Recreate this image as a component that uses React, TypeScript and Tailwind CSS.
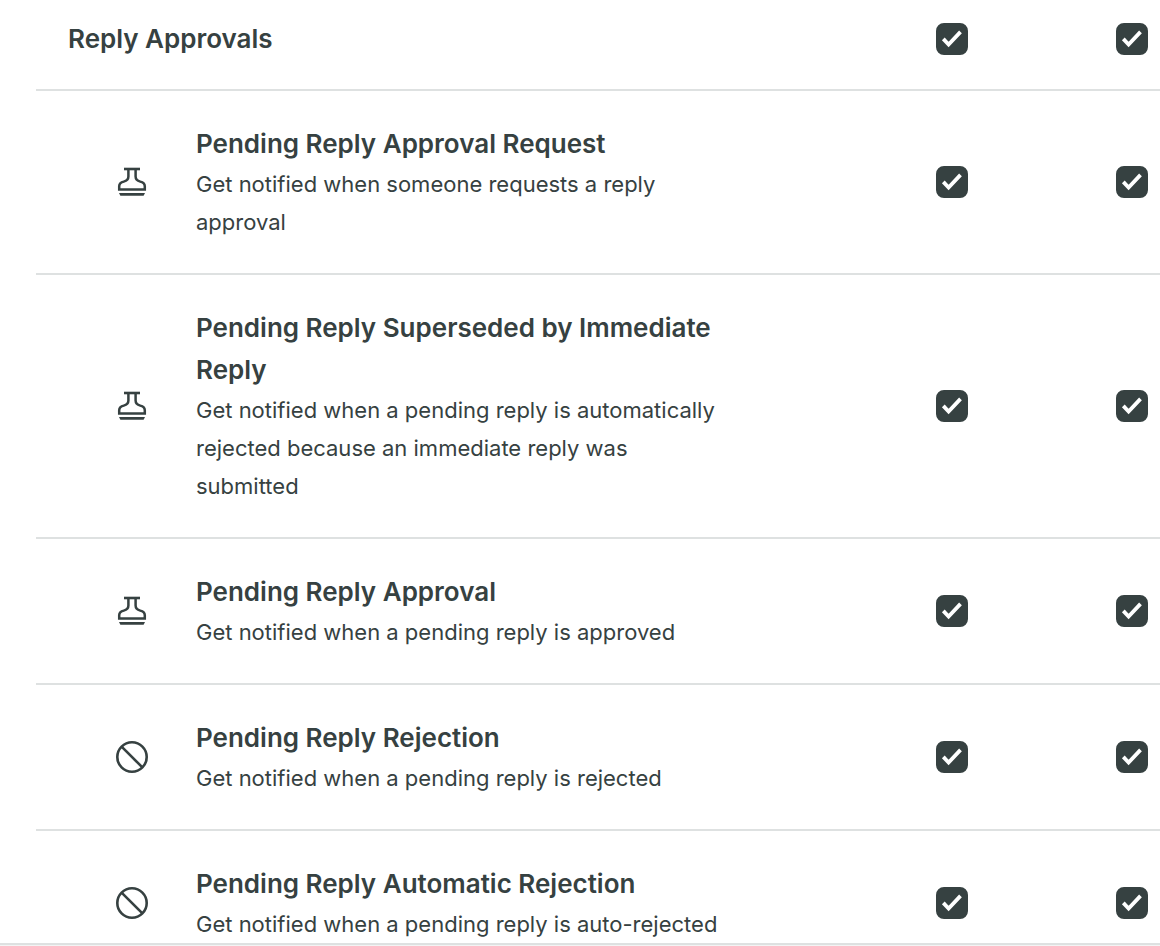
import { useState } from "react";

type IconName = "stamp" | "ban";

type Setting = {
  id: string;
  icon: IconName;
  title: string;
  description: string;
};

const settings: Setting[] = [
  {
    id: "approval-request",
    icon: "stamp",
    title: "Pending Reply Approval Request",
    description: "Get notified when someone requests a reply approval",
  },
  {
    id: "superseded",
    icon: "stamp",
    title: "Pending Reply Superseded by Immediate Reply",
    description:
      "Get notified when a pending reply is automatically rejected because an immediate reply was submitted",
  },
  {
    id: "approval",
    icon: "stamp",
    title: "Pending Reply Approval",
    description: "Get notified when a pending reply is approved",
  },
  {
    id: "rejection",
    icon: "ban",
    title: "Pending Reply Rejection",
    description: "Get notified when a pending reply is rejected",
  },
  {
    id: "auto-rejection",
    icon: "ban",
    title: "Pending Reply Automatic Rejection",
    description: "Get notified when a pending reply is auto-rejected",
  },
];

const channels = ["email", "push"];

const StampIcon = () => (
  <svg viewBox="0 0 32 32" className="w-8 h-8" fill="none" aria-hidden="true">
    <path d="M8 3h16" stroke="currentColor" strokeWidth="2.6" />
    <path
      d="M12.4 3v7.6c0 3-1.6 4.3-4.6 5C4.800 16.300 3.200 17.500 3.200 20.200v3.400h25.600v-3.400c0-2.700-1.600-3.900-4.600-4.600-3-.7-4.600-2-4.600-5V3"
      stroke="currentColor"
      strokeWidth="2.5"
    />
    <path d="M3 27h26l-1.400 2.800H4.400z" fill="currentColor" />
  </svg>
);

const BanIcon = () => (
  <svg viewBox="0 0 32 32" className="w-8 h-8" fill="none" aria-hidden="true">
    <circle cx="16" cy="16" r="14.7" stroke="currentColor" strokeWidth="2.6" />
    <path d="M5.600 5.600l20.800 20.800" stroke="currentColor" strokeWidth="2.6" />
  </svg>
);

const CheckBox = ({ label }: { label: string }) => {
  const [checked, setChecked] = useState(true);

  return (
    <label className="relative inline-block w-8 h-8 align-middle cursor-pointer">
      <input
        type="checkbox"
        aria-label={label}
        checked={checked}
        onChange={(e) => setChecked(e.target.checked)}
        className="peer block appearance-none w-8 h-8 rounded-lg border-2 border-[#364141] checked:bg-[#364141]"
      />
      <svg
        viewBox="0 0 32 32"
        className="absolute inset-0 w-8 h-8 pointer-events-none text-white opacity-0 peer-checked:opacity-100"
        fill="none"
        aria-hidden="true"
      >
        <path
          d="M7.300 15.900l5.300 5.600L24.500 8.900"
          stroke="currentColor"
          strokeWidth="3.8"
        />
      </svg>
    </label>
  );
};

const SettingRow = ({ setting }: { setting: Setting }) => (
  <tr className="group border-b-2 border-[#dee1e1] last:border-b-0">
    <td className="w-40 pt-8 pb-8 pl-20 group-last:pb-0">
      {setting.icon === "stamp" ? <StampIcon /> : <BanIcon />}
    </td>
    <th
      scope="row"
      className="pt-8 pb-8 pr-[68px] text-left font-normal group-last:pb-0"
    >
      <p className="text-[26px] leading-[42px] font-semibold">
        {setting.title}
      </p>
      <p className="text-[22px] leading-[38px]">{setting.description}</p>
    </th>
    {channels.map((channel) => (
      <td
        key={channel}
        className="w-[180px] pt-8 pb-8 pr-3 text-right group-last:pb-0"
      >
        <CheckBox label={`${setting.title} (${channel})`} />
      </td>
    ))}
  </tr>
);

const App = () => {
  return (
    <main className="min-h-screen bg-[#f3f4f4] font-['Inter',sans-serif] text-[#364141]">
      <section className="bg-white border-b-2 border-[#dee1e1] pl-9">
        <table className="w-full border-collapse">
          <thead>
            <tr className="border-b-2 border-[#dee1e1]">
              <th
                scope="col"
                colSpan={2}
                className="pt-[18px] pb-[29px] pl-8 text-left text-[26px] leading-[42px] font-semibold"
              >
                Reply Approvals
              </th>
              {channels.map((channel) => (
                <th
                  key={channel}
                  scope="col"
                  className="w-[180px] pt-[18px] pb-[29px] pr-3 text-right"
                >
                  <CheckBox label={`All reply approvals (${channel})`} />
                </th>
              ))}
            </tr>
          </thead>
          <tbody>
            {settings.map((setting) => (
              <SettingRow key={setting.id} setting={setting} />
            ))}
          </tbody>
        </table>
      </section>
    </main>
  );
};

export default App;
